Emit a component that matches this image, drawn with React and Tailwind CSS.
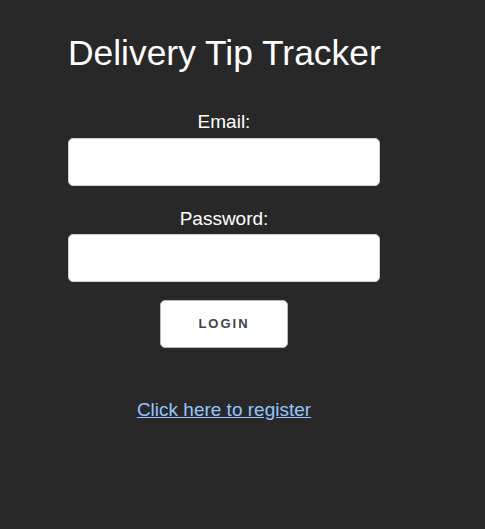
export default function App() {
  return (
    <div className="min-h-[529px] bg-[#282828] font-['Liberation_Sans',Arial,sans-serif] text-white">
      <div className="ml-[68px] w-[312px] pt-[33px]">
        <h1 className="text-[35.4px] leading-[41px] whitespace-nowrap">Delivery Tip Tracker</h1>
        <form className="mt-[37px] flex flex-col items-center" onSubmit={(e) => e.preventDefault()}>
          <label className="text-[19px] leading-[22px]">Email:</label>
          <input
            type="email"
            className="mt-[5px] h-[48px] w-full rounded-[5px] border border-[#ccc] bg-white px-3 text-black outline-none"
          />
          <label className="mt-[22px] text-[19px] leading-[22px]">Password:</label>
          <input
            type="password"
            className="mt-[4px] h-[48px] w-full rounded-[5px] border border-[#ccc] bg-white px-3 text-black outline-none"
          />
          <button
            type="submit"
            className="mt-[18px] h-[48px] w-[128px] rounded-[5px] border border-[#bbb] bg-white text-[13px] font-bold tracking-[2px] text-[#444]"
          >
            LOGIN
          </button>
        </form>
        <div className="mt-[51px] text-center">
          <a href="#" className="text-[19px] leading-[22px] text-[#92c6ff] underline">
            Click here to register
          </a>
        </div>
      </div>
    </div>
  );
}
